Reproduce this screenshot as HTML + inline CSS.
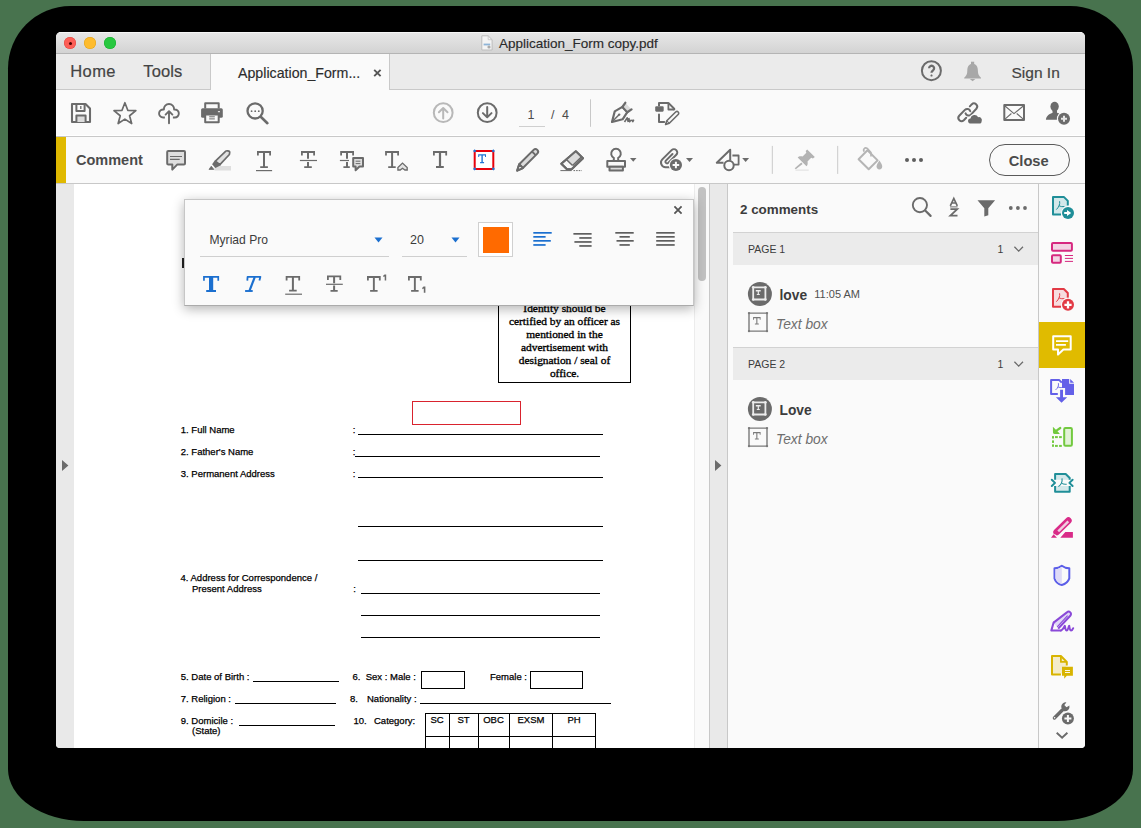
<!DOCTYPE html>
<html><head><meta charset="utf-8">
<style>
html,body{margin:0;padding:0;}
body{width:1141px;height:828px;background:#48734e;position:relative;overflow:hidden;font-family:"Liberation Sans",sans-serif;}
.a{position:absolute;}
.t{position:absolute;white-space:pre;line-height:1;}
svg{position:absolute;overflow:visible;}
#shadow{left:8px;top:6px;width:1125px;height:815px;background:#000;border-radius:62.5px 62.5px 76px 76px / 62.5px 62.5px 52px 52px;}
#win{left:56px;top:32px;width:1029px;height:716px;overflow:hidden;border-radius:5px 5px 4px 4px;background:#fafafa;}
#inner{left:-56px;top:-32px;width:1141px;height:828px;}
.ic{fill:none;stroke:#6d6d6d;stroke-width:2;}
</style></head><body>
<div id="shadow" class="a"></div>
<div id="win" class="a"><div id="inner" class="a">

<!-- title bar -->
<div class="a" style="left:56px;top:32px;width:1029px;height:21px;background:linear-gradient(#e7e7e7,#d3d3d3);border-top:1px solid #f6f6f6;box-sizing:border-box;"></div>
<div class="a" style="left:56px;top:53px;width:1029px;height:1px;background:#b4b4b4;"></div>
<div class="a" style="left:64px;top:37px;width:12px;height:12px;border-radius:50%;background:#fd5f57;box-shadow:inset 0 0 0 0.5px #e2463f;"></div>
<div class="a" style="left:68.5px;top:41.5px;width:3px;height:3px;border-radius:50%;background:#4d0000;"></div>
<div class="a" style="left:84px;top:37px;width:12px;height:12px;border-radius:50%;background:#febc2e;box-shadow:inset 0 0 0 0.5px #e1a116;"></div>
<div class="a" style="left:104px;top:37px;width:12px;height:12px;border-radius:50%;background:#28c840;box-shadow:inset 0 0 0 0.5px #14ae2a;"></div>
<div class="t" style="left:499px;top:37px;font-size:13.5px;color:#2a2a2a;-webkit-text-stroke:0.15px #2a2a2a;">Application_Form copy.pdf</div>

<!-- tab bar -->
<div class="a" style="left:56px;top:54px;width:1029px;height:35px;background:#ebebeb;"></div>
<div class="a" style="left:56px;top:89px;width:1029px;height:1px;background:#c9c9c9;"></div>
<div class="a" style="left:210px;top:54px;width:180px;height:36px;background:#fafafa;border-left:1px solid #c9c9c9;border-right:1px solid #c9c9c9;box-sizing:border-box;"></div>
<div class="t" style="left:70.2px;top:62.6px;font-size:16.5px;letter-spacing:0.45px;color:#444;-webkit-text-stroke:0.2px #444;">Home</div>
<div class="t" style="left:143.3px;top:62.6px;font-size:16.5px;letter-spacing:0.1px;color:#444;-webkit-text-stroke:0.2px #444;">Tools</div>
<div class="t" style="left:238px;top:66px;font-size:14.2px;color:#2c2c2c;-webkit-text-stroke:0.15px #2c2c2c;">Application_Form...</div>
<div class="t" style="left:1011.5px;top:64.5px;font-size:15.5px;color:#444;-webkit-text-stroke:0.2px #444;">Sign In</div>

<!-- toolbar -->
<div class="a" style="left:56px;top:90px;width:1029px;height:46px;background:#fafafa;"></div>
<div class="a" style="left:56px;top:135px;width:1029px;height:1px;background:#fff;"></div><div class="a" style="left:56px;top:136px;width:1029px;height:1px;background:#c8c8c8;"></div>

<!-- comment bar -->
<div class="a" style="left:56px;top:137px;width:1029px;height:46px;background:#fafafa;"></div>
<div class="a" style="left:56px;top:137px;width:10px;height:46px;background:#e0b900;"></div>
<div class="a" style="left:56px;top:183px;width:1029px;height:1px;background:#c8c8c8;"></div>
<div class="t" style="left:76px;top:153.4px;font-size:14.5px;font-weight:bold;color:#4b4b4b;">Comment</div>
<div class="a" style="left:989px;top:144px;width:81px;height:32px;border:1px solid #5a5a5a;border-radius:17px;box-sizing:border-box;"></div>
<div class="t" style="left:1008.7px;top:153.7px;font-size:14.7px;font-weight:bold;color:#4b4b4b;">Close</div>

<!-- content -->
<div class="a" style="left:56px;top:184px;width:18px;height:564px;background:#e9e9e9;"></div>
<div class="a" style="left:74px;top:184px;width:620px;height:564px;background:#ffffff;"></div>
<div class="a" style="left:694px;top:184px;width:15px;height:564px;background:#fafafa;border-left:1px solid #ececec;box-sizing:border-box;"></div>
<div class="a" style="left:709px;top:184px;width:1px;height:564px;background:#c8c8c8;"></div>
<div class="a" style="left:710px;top:184px;width:17px;height:564px;background:#e9e9e9;"></div>
<div class="a" style="left:727px;top:184px;width:1px;height:564px;background:#c8c8c8;"></div>
<div class="a" style="left:728px;top:184px;width:310px;height:564px;background:#fafafa;"></div>
<div class="a" style="left:1038px;top:184px;width:1px;height:564px;background:#c8c8c8;"></div>
<div class="a" style="left:1039px;top:184px;width:46px;height:564px;background:#fafafa;"></div>

<!-- page content -->
<div class="a" style="left:181.8px;top:258px;width:2.2px;height:10px;background:#222;"></div>
<div style="font-family:'Liberation Sans',sans-serif;color:#000;-webkit-text-stroke:0.25px #000;">
<div class="t" style="left:180.8px;top:425px;font-size:9.5px;">1. Full Name</div>
<div class="t" style="left:180.8px;top:446.6px;font-size:9.5px;">2. Father's Name</div>
<div class="t" style="left:180.8px;top:468.9px;font-size:9.5px;">3. Permanent Address</div>
<div class="t" style="left:352.8px;top:425px;font-size:9.5px;">:</div>
<div class="t" style="left:352.8px;top:446.6px;font-size:9.5px;">:</div>
<div class="t" style="left:352.8px;top:468.9px;font-size:9.5px;">:</div>
<div class="a" style="left:358px;top:433.5px;width:245px;height:1px;background:#000;"></div>
<div class="a" style="left:355px;top:455.6px;width:245px;height:1px;background:#000;"></div>
<div class="a" style="left:358px;top:477.3px;width:245px;height:1px;background:#000;"></div>
<div class="a" style="left:358px;top:526.2px;width:245px;height:1px;background:#000;"></div>
<div class="a" style="left:358px;top:559.7px;width:245px;height:1px;background:#000;"></div>
<div class="t" style="left:180.5px;top:572.7px;font-size:9.5px;">4. Address for Correspondence /</div>
<div class="t" style="left:192px;top:583.8px;font-size:9.5px;">Present Address</div>
<div class="t" style="left:353.2px;top:583.5px;font-size:9.5px;">:</div>
<div class="a" style="left:361px;top:592.9px;width:239px;height:1px;background:#000;"></div>
<div class="a" style="left:361px;top:614.9px;width:239px;height:1px;background:#000;"></div>
<div class="a" style="left:361px;top:636.6px;width:239px;height:1px;background:#000;"></div>

<div class="t" style="left:180.8px;top:671.9px;font-size:9.5px;">5. Date of Birth :</div>
<div class="a" style="left:253px;top:680.7px;width:85.5px;height:1px;background:#000;"></div>
<div class="t" style="left:352.5px;top:672.1px;font-size:9.5px;">6.  Sex : Male :</div>
<div class="a" style="left:421px;top:670.5px;width:44px;height:18px;border:1px solid #000;box-sizing:border-box;"></div>
<div class="t" style="left:490px;top:672.1px;font-size:9.5px;">Female :</div>
<div class="a" style="left:530px;top:670.5px;width:53px;height:18px;border:1px solid #000;box-sizing:border-box;"></div>

<div class="t" style="left:180.8px;top:693.8px;font-size:9.5px;">7. Religion :</div>
<div class="a" style="left:234.5px;top:702.9px;width:101px;height:1px;background:#000;"></div>
<div class="t" style="left:350px;top:693.9px;font-size:9.5px;">8.</div>
<div class="t" style="left:367px;top:693.9px;font-size:9.5px;">Nationality :</div>
<div class="a" style="left:419.5px;top:702.8px;width:191px;height:1px;background:#000;"></div>

<div class="t" style="left:180.8px;top:715.6px;font-size:9.5px;">9. Domicile :</div>
<div class="a" style="left:239px;top:725.1px;width:96px;height:1px;background:#000;"></div>
<div class="t" style="left:192px;top:725.9px;font-size:9.5px;">(State)</div>
<div class="t" style="left:353.5px;top:715.9px;font-size:9.5px;">10.</div>
<div class="t" style="left:374px;top:715.9px;font-size:9.5px;">Category:</div>
<div class="a" style="left:425px;top:712.7px;width:171px;height:60px;border:1px solid #000;box-sizing:border-box;"></div>
<div class="a" style="left:425px;top:735.7px;width:171px;height:1px;background:#000;"></div>
<div class="a" style="left:448.6px;top:712.7px;width:1px;height:60px;background:#000;"></div>
<div class="a" style="left:477.7px;top:712.7px;width:1px;height:60px;background:#000;"></div>
<div class="a" style="left:509px;top:712.7px;width:1px;height:60px;background:#000;"></div>
<div class="a" style="left:552px;top:712.7px;width:1px;height:60px;background:#000;"></div>
<div class="t" style="left:425px;width:24px;text-align:center;top:714.7px;font-size:9.5px;">SC</div>
<div class="t" style="left:449px;width:29px;text-align:center;top:714.7px;font-size:9.5px;">ST</div>
<div class="t" style="left:478px;width:31px;text-align:center;top:714.7px;font-size:9.5px;">OBC</div>
<div class="t" style="left:509.5px;width:43px;text-align:center;top:714.7px;font-size:9.5px;">EXSM</div>
<div class="t" style="left:552.5px;width:43px;text-align:center;top:714.7px;font-size:9.5px;">PH</div>
</div>

<!-- identity box -->
<div class="a" style="left:498px;top:280px;width:133px;height:103px;border:1px solid #000;box-sizing:border-box;"></div>
<div class="a" style="left:498px;top:302px;width:133px;text-align:center;font-family:'Liberation Serif',serif;font-size:11.4px;line-height:13px;color:#000;-webkit-text-stroke:0.35px #000;">Identity should be<br>certified by an officer as<br>mentioned in the<br>advertisement with<br>designation / seal of<br>office.</div>

<!-- red textbox annotation -->
<div class="a" style="left:411.5px;top:400.5px;width:109px;height:24px;border:1px solid #d9232e;box-sizing:border-box;"></div>

<!-- scrollbar thumb -->
<div class="a" style="left:698px;top:187px;width:8px;height:94px;border-radius:4px;background:#c2c2c2;"></div>

<!-- popup -->
<div class="a" style="left:184px;top:199px;width:510px;height:107px;background:#fafafa;border:1px solid #c6c6c6;border-bottom-color:#ababab;box-sizing:border-box;box-shadow:0 3px 11px rgba(0,0,0,0.3);"></div>
<div class="t" style="left:209.5px;top:234.3px;font-size:12.1px;color:#3b3b3b;">Myriad Pro</div>
<div class="a" style="left:199.5px;top:256px;width:189.5px;height:1px;background:#cfcfcf;"></div>
<div class="t" style="left:410px;top:233.5px;font-size:12.5px;color:#3b3b3b;">20</div>
<div class="a" style="left:401.5px;top:256px;width:65px;height:1px;background:#cfcfcf;"></div>
<svg style="left:374px;top:237px" width="9" height="6"><path d="M0.5 0.5 L8.5 0.5 L4.5 5.5 Z" fill="#1b6fcf"/></svg>
<svg style="left:451px;top:237px" width="9" height="6"><path d="M0.5 0.5 L8.5 0.5 L4.5 5.5 Z" fill="#1b6fcf"/></svg>
<div class="a" style="left:478px;top:222px;width:35px;height:35px;border:1px solid #d0d0d0;box-sizing:border-box;background:#fff;"></div>
<div class="a" style="left:482.5px;top:226.5px;width:26px;height:26px;background:#ff6a00;"></div>
<svg style="left:672px;top:204px" width="12" height="12"><path d="M2.4 2.4 L9.6 9.6 M9.6 2.4 L2.4 9.6" stroke="#555" stroke-width="1.8"/></svg>


<!-- comments panel -->
<div class="t" style="left:740px;top:202.8px;font-size:13.4px;font-weight:bold;color:#3c3c3c;">2 comments</div>
<div class="a" style="left:733px;top:232px;width:305px;height:1px;background:#d2d2d2;"></div>
<div class="a" style="left:733px;top:233px;width:305px;height:32px;background:#ebebeb;"></div>
<div class="t" style="left:748px;top:244px;font-size:10.5px;color:#3c3c3c;">PAGE 1</div>
<div class="t" style="left:997.5px;top:244px;font-size:10.5px;color:#3c3c3c;">1</div>
<div class="a" style="left:733px;top:347px;width:305px;height:1px;background:#d2d2d2;"></div>
<div class="a" style="left:733px;top:348px;width:305px;height:32px;background:#ebebeb;"></div>
<div class="t" style="left:748px;top:359px;font-size:10.5px;color:#3c3c3c;">PAGE 2</div>
<div class="t" style="left:997.5px;top:359px;font-size:10.5px;color:#3c3c3c;">1</div>

<div class="t" style="left:779.5px;top:289.3px;font-size:13.8px;font-weight:bold;color:#3c3c3c;">love</div>
<div class="t" style="left:814.3px;top:289px;font-size:11px;color:#505050;">11:05 AM</div>
<div class="t" style="left:776px;top:317.9px;font-size:13.8px;font-style:italic;color:#6e6e6e;">Text box</div>
<div class="t" style="left:779.5px;top:404.3px;font-size:13.8px;font-weight:bold;color:#3c3c3c;">Love</div>
<div class="t" style="left:776px;top:432.9px;font-size:13.8px;font-style:italic;color:#6e6e6e;">Text box</div>

<svg style="left:0;top:0" width="1141" height="828">
<g fill="none" stroke="#6b6b6b" stroke-width="2" stroke-linejoin="round">
<!-- header icons -->
<circle cx="919.9" cy="205.1" r="7.1" stroke-width="1.9"/>
<path d="M925.2 210.5 L930.6 215.9" stroke-width="2.2" stroke-linecap="round"/>
<path d="M950.3 205.8 L953.8 198.4 L957.3 205.8 M951.6 203 H956" stroke-width="1.7" stroke-linejoin="miter"/>
<path d="M950 206.9 H957.6" stroke-width="1"/>
<path d="M950.4 209.2 H957.2 L950.4 215.6 H957.5" stroke-width="1.8" stroke-linejoin="miter"/>
<path d="M977.5 200.2 H995.1 L988.3 208.3 V215.2 L984.3 216.6 V208.3 Z" fill="#6b6b6b" stroke="none"/>
<g fill="#6b6b6b" stroke="none"><circle cx="1010.8" cy="208" r="1.9"/><circle cx="1017.9" cy="208" r="1.9"/><circle cx="1025" cy="208" r="1.9"/></g>
<!-- chevrons -->
<path d="M1014.4 246.8 L1018.7 251.1 L1023 246.8 M1014.4 361.8 L1018.7 366.1 L1023 361.8" stroke-width="1.3" stroke-linejoin="miter"/>
<!-- avatars -->
<circle cx="759.9" cy="293.9" r="12" fill="#6b6b6b" stroke="none"/>
<circle cx="759.9" cy="408.9" r="12" fill="#6b6b6b" stroke="none"/>
<g stroke="#ececec" stroke-width="1.8">
<rect x="753.2" y="287.3" width="12.2" height="12.2"/>
<rect x="753.2" y="402.3" width="12.2" height="12.2"/>
</g>
<g fill="#ececec" stroke="none">
<circle cx="753.2" cy="287.3" r="1.3"/><circle cx="765.4" cy="287.3" r="1.3"/><circle cx="753.2" cy="299.5" r="1.3"/><circle cx="765.4" cy="299.5" r="1.3"/>
<circle cx="753.2" cy="402.3" r="1.3"/><circle cx="765.4" cy="402.3" r="1.3"/><circle cx="753.2" cy="414.5" r="1.3"/><circle cx="765.4" cy="414.5" r="1.3"/>
<path d="M755.8 290 H760.7 V291.6 H758.9 V294 H759.8 V295 H756.8 V294 H757.7 V291.6 H755.8 Z"/>
<path d="M755.8 405 H760.7 V406.6 H758.9 V409 H759.8 V410 H756.8 V409 H757.7 V406.6 H755.8 Z"/>
</g>
<!-- text box icons -->
<g stroke="#7a7a7a" stroke-width="1.4">
<rect x="749" y="313.1" width="18" height="18"/>
<rect x="749" y="428.1" width="18" height="18"/>
</g>
<g fill="#7a7a7a" stroke="none">
<circle cx="749" cy="313.1" r="1.2"/><circle cx="767" cy="313.1" r="1.2"/><circle cx="749" cy="331.1" r="1.2"/><circle cx="767" cy="331.1" r="1.2"/>
<circle cx="749" cy="428.1" r="1.2"/><circle cx="767" cy="428.1" r="1.2"/><circle cx="749" cy="446.1" r="1.2"/><circle cx="767" cy="446.1" r="1.2"/>
<path d="M753.1 317 H760.6 V319.8 H759.7 V318.2 H757.4 V323.6 H758.8 V324.5 H754.9 V323.6 H756.3 V318.2 H754 V319.8 H753.1 Z"/>
<path d="M753.1 432 H760.6 V434.8 H759.7 V433.2 H757.4 V438.6 H758.8 V439.5 H754.9 V438.6 H756.3 V433.2 H754 V434.8 H753.1 Z"/>
</g>
<!-- gutter arrows -->
<path d="M62 460 L68.4 465.5 L62 471 Z M715 460 L721.4 465.5 L715 471 Z" fill="#6b6b6b" stroke="none"/>
</g>
</svg>

<!--PANEL-->

<!-- sidebar -->
<div class="a" style="left:1039px;top:322px;width:46px;height:46px;background:#e0bb00;"></div>
<svg style="left:0;top:0" width="1141" height="828">
<g fill="none" stroke-width="2" stroke-linejoin="round">
<!-- export pdf teal -->
<g stroke="#1f8e98">
<path d="M1061 214.6 H1053 V196.9 H1063.8 L1067.8 200.9 V205.5" fill="#d3e8ea"/>
<path d="M1059.6 201.2 C1060.3 204 1058.6 207.6 1056.3 209.6 M1058.9 205.6 C1060.5 206.6 1062.5 206.8 1064.4 206.5" stroke-width="1"/>
</g>
<circle cx="1068" cy="212.9" r="7" fill="#fafafa"/>
<circle cx="1068" cy="212.9" r="6" fill="#1f8e98"/>
<path d="M1064.2 212.9 H1067.6" stroke="#fff" stroke-width="2"/>
<path d="M1067 209.9 L1071.2 212.9 L1067 215.9 Z" fill="#fff"/>
<!-- organize magenta -->
<g stroke="#d6287f">
<rect x="1052" y="243" width="19.9" height="7.7" rx="1" fill="#f3d4e4"/>
<rect x="1052" y="255.2" width="8.8" height="7.5" rx="1" fill="#f3d4e4"/>
<path d="M1064.9 255.5 H1073 M1064.9 258.4 H1073 M1064.9 261.4 H1073" stroke-width="1"/>
</g>
<!-- create pdf red -->
<g stroke="#e23a45">
<path d="M1061 306.7 H1053 V289 H1063.8 L1067.8 293 V297.7" fill="#f7dcdf"/>
<path d="M1059.6 293.3 C1060.3 296.1 1058.6 299.7 1056.3 301.7 M1058.9 297.7 C1060.5 298.7 1062.5 298.9 1064.4 298.6" stroke-width="1"/>
</g>
<circle cx="1068" cy="304.8" r="7" fill="#fafafa"/>
<circle cx="1068" cy="304.8" r="6" fill="#e23a45"/>
<path d="M1064.4 304.8 H1071.6 M1068 301.2 V308.4" stroke="#fff" stroke-width="2.3"/>
<!-- comment active -->
<path d="M1053.2 336.2 H1070.7 V349.6 H1063.4 L1058 354.6 V349.6 H1053.2 Z" stroke="#fff" stroke-width="2"/>
<path d="M1056 341.2 H1068.2 M1056 344.9 H1065.9" stroke="#fff" stroke-width="1.8"/>
<!-- combine purple -->
<g stroke="#6360e8">
<path d="M1057.8 393.9 H1051.1 V380.1 H1059.3 L1061.8 382.6" />
<path d="M1058.4 383.2 C1059 385.5 1057.6 388.4 1055.6 389.9 M1058 386.8 C1059.3 387.6 1060.6 387.7 1061.8 387.5" stroke-width="0.9"/>
</g>
<path d="M1062 379.1 H1069.2 V383.7 H1074 V394.9 H1065.1 V388.1 H1062 Z" fill="#6360e8"/>
<path d="M1070.2 379.1 L1074 382.7 H1070.2 Z" fill="#6360e8"/>
<path d="M1060.1 389.8 H1063 V397.2 H1067.2 L1061.55 402.8 L1055.9 397.2 H1060.1 Z" fill="#6360e8"/>
<!-- organize pages green -->
<g stroke="#72c93f">
<rect x="1064.2" y="428" width="7.7" height="17.7" rx="1.2" fill="#e3f2d8"/>
</g>
<g fill="#72c93f" stroke="none">
<rect x="1052" y="436.1" width="2" height="2.4"/><rect x="1052" y="440.4" width="2" height="2.5"/><rect x="1052" y="444.4" width="2" height="2.4"/>
<rect x="1055" y="436.1" width="2.8" height="2"/><rect x="1059.1" y="436.1" width="2.7" height="2"/>
<rect x="1055" y="444.9" width="2.8" height="2"/><rect x="1059.1" y="444.9" width="2.7" height="2"/>
</g>
<path d="M1052.9 427 L1059.9 434 L1054.2 434 Z" fill="#72c93f"/>
<path d="M1052.9 427 L1053 433.5 L1059.5 433.5 Z" fill="#72c93f"/>
<path d="M1056.5 430.6 L1060.3 428" stroke="#72c93f" stroke-width="2.2" stroke-linecap="round"/>
<!-- compress teal -->
<g stroke="#1f8e98">
<path d="M1055.1 479.8 V474 H1065.7 L1069.7 478 V479.8 M1055.1 486.1 V491.7 H1069.7 V486.1" fill="#d3e8ea"/>
<path d="M1051.8 479.8 L1055 482.9 L1051.8 486 M1072.6 479.8 L1069.4 482.9 L1072.6 486" stroke-width="2" stroke-linecap="round"/>
<path d="M1062 478.3 C1062.5 481.8 1060.6 485.1 1058.4 486.6 M1062 483.4 C1063.5 484.6 1065.2 484.4 1066.7 484.2" stroke-width="1.1"/>
</g>
<!-- highlighter pink -->
<path d="M1056.6 532.1 L1068.4 520.6" stroke="#d92b88" stroke-width="6.6" stroke-linecap="round"/>
<path d="M1058.2 531.3 L1068.3 521.4" stroke="#f1cde0" stroke-width="2.4" stroke-linecap="butt"/>
<path d="M1054.4 534.4 L1058.9 538.8" stroke="#fafafa" stroke-width="1.2"/>
<path d="M1051 537.7 L1053.6 534.2 L1057 537.7 Z M1060.3 537.7 L1065.3 531.9 H1072.9 V537.7 Z" fill="#d92b88"/>
<!-- shield -->
<path d="M1061.8 565.8 C1059.6 567.5 1057 568.3 1054.5 568.3 V578.4 C1055.5 582 1058.5 584.2 1061.8 585 C1065.1 584.2 1068.1 582 1069.3 578.4 V568.3 C1066.6 568.3 1064 567.5 1061.8 565.8 Z" fill="#fafafa" stroke="#5b5ee8"/>
<path d="M1061.8 566.8 V584 C1059 583.2 1056.4 581.4 1055.5 578.3 V569.2 C1057.8 569 1060 568.2 1061.8 566.8 Z" fill="#dedaf7"/>
<!-- sign purple -->
<path d="M1053.6 622.6 L1066.9 612.4 A2.4 2.4 0 0 1 1070.3 615.8 L1058.2 628.6" fill="#e0d8f6" stroke="#8a49d8" stroke-width="2"/>
<path d="M1057.2 626.9 L1067.6 615.6" stroke="#8a49d8" stroke-width="1.1"/>
<path d="M1053.6 622.6 L1051.3 630.6 H1060.8" stroke="#8a49d8" stroke-width="2" stroke-linecap="round" stroke-linejoin="round"/>
<path d="M1060.8 630.6 C1062.4 630.2 1063.8 627.6 1064.8 625.8 C1065.2 628 1065.5 630.6 1066.8 630.6 C1068 630.6 1068.4 627.2 1069.2 625.8 C1069.6 628 1069.9 630.6 1071.1 630.6 C1072 630.6 1072.8 629.2 1073.2 628.2" stroke="#8a49d8" stroke-width="2" stroke-linecap="round"/>
<!-- send for comments yellow -->
<g stroke="#d8b400">
<path d="M1060.9 674.6 H1052 V656 H1060.9 L1066.8 661.9 V665.5" fill="#f4ecc9"/>
<path d="M1060.9 656 V661.9 H1066.8" stroke-width="1.8"/>
</g>
<path d="M1062 666.8 H1072.9 V675.7 H1066.8 L1064.2 678.8 V675.7 H1062 Z" fill="#d8b400"/>
<path d="M1065 670.5 H1070 M1065 672.5 H1070" stroke="#fff" stroke-width="0.9"/>
<!-- wrench -->
<path d="M1054.4 718 L1062.6 709.8" stroke="#6b6b6b" stroke-width="3.4" stroke-linecap="round"/>
<path d="M1061.2 707.2 A4.7 4.7 0 0 1 1066.4 702.4 L1064.3 704.9 L1066.5 707.3 L1069.4 705.5 A4.7 4.7 0 0 1 1063.8 711.2 Z" fill="#6b6b6b"/>
<circle cx="1054.6" cy="717.8" r="0.8" fill="#fafafa"/>
<circle cx="1067.9" cy="718.4" r="7" fill="#fafafa"/>
<circle cx="1067.9" cy="718.4" r="6" fill="#6b6b6b"/>
<path d="M1064.4 718.4 H1071.4 M1067.9 714.9 V721.9" stroke="#fafafa" stroke-width="2"/>
<path d="M1056.7 732.8 L1062.1 737.8 L1067.4 732.8" stroke="#6b6b6b" stroke-width="1.9" stroke-linejoin="miter"/>
</g>
</svg>

<!--SIDEBAR-->

<svg style="left:0;top:0" width="1141" height="828">
<g fill="none" stroke="#6b6b6b" stroke-width="2" stroke-linejoin="round">
<!-- save -->
<path d="M72 104 H85.5 L90 108.5 V122 H72 Z" stroke-width="2.1"/>
<path d="M76.4 104 V111 H84.6 V104" />
<path d="M80.8 106 V109" stroke-width="1.3"/>
<path d="M76.4 122 V115.5 H85.6 V122" fill="#dcdcdc"/>
<!-- star -->
<path d="M124.90 102.75 L127.78 110.29 L135.84 110.70 L129.56 115.76 L131.66 123.55 L124.90 119.15 L118.14 123.55 L120.24 115.76 L113.96 110.70 L122.02 110.29 Z" stroke-width="1.7"/>
<!-- cloud upload -->
<path d="M164.9 117.55 H163.1 A4.05 4.05 0 1 1 163.86 109.52 A5.15 5.15 0 1 1 174.14 109.5 A4.05 4.05 0 1 1 174.8 117.55 H172.9" stroke-width="1.9"/>
<path d="M169 123.3 V111.4 M165.6 114.6 L169 111.2 L172.4 114.6" stroke-width="1.9" stroke-linecap="round"/>
<!-- printer -->
<path d="M205.2 108.5 V103.2 H218.7 V108.5" stroke-width="2"/>
<rect x="201.1" y="108.2" width="21.7" height="9.6" rx="1.5" fill="#6b6b6b" stroke="none"/>
<rect x="205.2" y="114.6" width="13.5" height="7.6" fill="#fafafa" stroke-width="2"/>
<path d="M209.2 116.8 H214.8 M209.2 118.9 H214.8" stroke-width="1"/>
<rect x="217.9" y="111.2" width="2.1" height="1" fill="#fafafa" stroke="none"/>
<!-- search more -->
<circle cx="255.1" cy="110.9" r="7.6" stroke-width="2.3"/>
<path d="M261 117 L267.4 123.2" stroke-width="2.6" stroke-linecap="round"/>
<circle cx="251.6" cy="111.2" r="0.9" fill="#6b6b6b" stroke="none"/>
<circle cx="255.2" cy="111.2" r="0.9" fill="#6b6b6b" stroke="none"/>
<circle cx="258.8" cy="111.2" r="0.9" fill="#6b6b6b" stroke="none"/>
<!-- prev page (disabled) -->
<g stroke="#b8b8b8">
<circle cx="443.2" cy="112.7" r="9.4"/>
<path d="M443.2 118.4 V108.2 M438.9 112.3 L443.2 108 L447.5 112.3" stroke-linecap="round"/>
</g>
<!-- next page -->
<circle cx="487.2" cy="112.7" r="9.4"/>
<path d="M487.2 107 V117.2 M482.9 113.1 L487.2 117.4 L491.5 113.1" stroke-linecap="round"/>
<!-- separator -->
<path d="M590.5 99.3 V126.8" stroke="#c8c8c8" stroke-width="1"/>
<!-- pen -->
<path d="M612 122 L614.7 111.4 L622.4 106.9 L627.3 112.2 L622.6 119.3 Z" stroke-width="2.2"/>
<path d="M625.3 102.8 L631.5 109.4 L627.3 112.2 L622.4 106.9 Z" fill="#dcdcdc" stroke="none"/>
<path d="M625.3 102.8 L622.4 106.9 M631.5 109.4 L627.3 112.2" stroke-width="2.3" stroke-linecap="round"/>
<path d="M622.4 106.9 L627.3 112.2" stroke-width="1.8"/>
<path d="M612.4 121.6 L619 114.8" stroke-width="1.5"/>
<circle cx="619.2" cy="114.6" r="1.2" fill="#6b6b6b" stroke="none"/>
<path d="M624.5 122 L627.3 117.8 L628.2 122 M628.8 118 L629.6 121.8 L631 120 M631.5 119.6 L632.8 121.6 L633.8 119.6" stroke-width="1.6"/>
<!-- doc edit -->
<rect x="655.2" y="106.3" width="8.5" height="5.4" rx="1.1" fill="#6b6b6b" stroke="none"/>
<path d="M659 106.3 V102.9 H668.4 L674.2 108.8 V110.3" stroke-width="2"/>
<path d="M668.4 102.9 V109.5 H674.2" stroke-width="1.8"/>
<path d="M659 114.6 V122 H664.2" stroke-width="2" stroke-linecap="round"/>
<path d="M666.8 120.8 L675.9 111.8 A1.8 1.8 0 0 1 678.4 114.3 L669.3 123.3 L665.6 124.4 Z" fill="#fafafa" stroke-width="1.6"/>
<path d="M666.8 120.8 L669.3 123.3" stroke-width="1.1"/>

<!-- link cloud -->
<path d="M969.82 106.39 L971.66 104.42 A3.2 3.2 0 0 1 976.34 108.78 L970.94 114.58 A3.2 3.2 0 0 1 965.54 113.34" stroke-width="2" stroke-linecap="round"/>
<path d="M966.20 117.75 L963.80 120.22 A3.2 3.2 0 0 1 959.20 115.78 L964.90 109.88 A3.2 3.2 0 0 1 970.28 111.22" stroke-width="2" stroke-linecap="round"/>
<path d="M969.6 123.4 A2.6 2.6 0 0 1 970.4 118.4 A4.2 4.2 0 0 1 978.2 117.2 A3 3 0 0 1 981.6 121.4 A2.4 2.4 0 0 1 980.4 123.4 Z" fill="#fafafa" stroke="#fafafa" stroke-width="2"/>
<path d="M969.6 123.4 A2.6 2.6 0 0 1 970.4 118.4 A4.2 4.2 0 0 1 978.2 117.2 A3 3 0 0 1 981.6 121.4 A2.4 2.4 0 0 1 980.4 123.4 Z" fill="#6b6b6b" stroke="none"/>
<!-- mail -->
<rect x="1004.3" y="105.1" width="19.7" height="14.8" stroke-width="2"/>
<path d="M1005 106 L1014 113.6 L1023.3 106 M1005 119.2 L1011.4 113.5 M1023.3 119.2 L1016.7 113.5" stroke-width="1.1"/>
<!-- person add -->
<ellipse cx="1054.6" cy="106.6" rx="4.2" ry="4.8" fill="#6b6b6b" stroke="none"/>
<path d="M1052.5 110 L1056.8 110 L1057.2 113 L1059.2 113.2 L1058.5 114.3 A6.9 6.9 0 0 0 1056.9 119.8 H1045.9 C1046.3 115.4 1049.8 113.4 1052.5 112.9 Z" fill="#6b6b6b" stroke="none"/>
<circle cx="1064" cy="118.8" r="6.9" fill="#fafafa" stroke="none"/>
<circle cx="1064" cy="118.8" r="6" fill="#6b6b6b" stroke="none"/>
<path d="M1061 118.8 H1067 M1064 115.8 V121.8" stroke="#e6e6e6" stroke-width="2"/>
<!-- help -->
<circle cx="931.4" cy="70.7" r="9.5" stroke-width="2"/>
<path d="M929.1 68.2 A2.5 2.5 0 1 1 933.2 70.2 C932 71 931.5 71.5 931.5 72.8" stroke-width="2.3"/>
<path d="M931.5 74.6 V76.6 M930.5 75.6 H932.5" stroke-width="1.3"/>
<!-- bell -->
<rect x="971" y="61.7" width="3.2" height="3" fill="#a8a8a8" stroke="none"/>
<path d="M972.6 63.8 C976.3 63.8 977.9 66.8 977.9 70.8 C977.9 74 978.8 76 981 77.8 V78.5 H964.2 V77.8 C966.4 76 967.3 74 967.3 70.8 C967.3 66.8 968.9 63.8 972.6 63.8 Z" fill="#a8a8a8" stroke="none"/>
<path d="M969.8 79.1 H975.4 L972.6 81.3 Z" fill="#a8a8a8" stroke="none"/>
</g>
</svg>

<svg style="left:0;top:0" width="1141" height="828">
<g fill="none" stroke="#6b6b6b" stroke-width="2" stroke-linejoin="round">
<!-- page number -->
<!-- comment bubble -->
<path d="M168.3 151 H184 Q185 151 185 152 V163.4 Q185 164.4 184 164.4 H177.4 L172.3 169.6 V164.4 H168.3 Q167.2 164.4 167.2 163.4 V152 Q167.2 151 168.3 151 Z" fill="#dedede" stroke-width="2"/>
<path d="M170 156.5 H182 M170 159.4 H179.7" stroke-width="1.1"/>
<!-- highlighter -->
<rect x="214.5" y="166" width="16.5" height="4.5" fill="#dedede" stroke="none"/>
<path d="M215.4 161.2 L225.8 151.2 Q226.5 150.6 227.5 150.8 L228.9 151.1 Q229.8 151.4 229.7 152.3 L229.4 154.5 L219.9 164.6 Z" fill="#e0e0e0" stroke-width="1.7"/>
<path d="M212.1 164.3 L214.8 160.6 L220.8 165.3 L215.4 167.9 Z" fill="#6b6b6b" stroke="none"/>
<path d="M209 169.4 L211.3 166.2 L213.8 169.4 Z" fill="#6b6b6b" stroke="#6b6b6b" stroke-width="0.8"/>
<!-- underline T -->
<g fill="#6b6b6b" stroke="none">
<path d="M257 151 H271 V155.6 H269.2 V152.9 H265 V166.2 H267.9 V167.9 H260.2 V166.2 H263 V152.9 H258.8 V155.6 H257 Z"/>
<rect x="256" y="170" width="16.1" height="1.2"/>
<!-- strike T -->
<path d="M301 151 H315 V155.6 H313.2 V152.9 H309 V158.7 H307 V152.9 H302.8 V155.6 H301 Z"/>
<rect x="299.9" y="159.9" width="17.1" height="1.2"/>
<path d="M307 162 H309 V166.2 H311.8 V167.9 H304.2 V166.2 H307 Z"/>
<!-- replace T -->
<path d="M340.2 151 H354 V155.6 H352.2 V152.9 H348 V158.7 H346 V152.9 H342 V155.6 H340.2 Z"/>
<rect x="339.9" y="159.9" width="9.1" height="1.2"/>
<path d="M346 162 H348 V166.2 H349.8 V167.9 H343.4 V166.2 H346 Z"/>
<!-- insert T -->
<path d="M385.1 151 H399 V155.6 H397.2 V152.9 H393.1 V166.2 H395.7 V167.9 H388.2 V166.2 H391.1 V152.9 H386.9 V155.6 H385.1 Z"/>
<!-- plain T -->
<path d="M433 151 H447.1 V155.6 H445.3 V152.9 H441.1 V166.1 H443.8 V167.9 H436 V166.1 H438.9 V152.9 H434.8 V155.6 H433 Z"/>
</g>
<path d="M353.2 158 H363 V166.5 H359.5 L355.6 170.2 V166.5 H353.2 Z" fill="#dedede" stroke-width="2"/>
<path d="M355.6 161.2 H360.4 M355.6 163.6 H360.4" stroke-width="1"/>
<path d="M398.2 170 L402.3 165.2 L406.9 170 Z" fill="none" stroke="none"/>
<path d="M397.9 170 V167.5 L402.5 163.1 L407.2 167.5 V170 H404.9 L402.5 168.3 L400.2 170 Z" fill="#e4e4e4" stroke-width="1.3" stroke-linejoin="miter"/>
<!-- text box tool (selected) -->
<rect x="474.7" y="150.9" width="18.6" height="18" fill="#fff" stroke="#e8000b" stroke-width="2"/>
<g fill="#1f74d4" stroke="none">
<path d="M474.7 149.2 L476.4 150.9 L474.7 152.6 L473 150.9 Z M493.3 149.2 L495 150.9 L493.3 152.6 L491.6 150.9 Z M474.7 167.2 L476.4 168.9 L474.7 170.6 L473 168.9 Z M493.3 167.2 L495 168.9 L493.3 170.6 L491.6 168.9 Z"/>
<path d="M478.2 154.2 H486 V157 H485 V155.5 H482.8 V162 H484.1 V163.2 H480.1 V162 H481.4 V155.5 H479.2 V157 H478.2 Z"/>
</g>
<!-- pencil -->
<path d="M517.2 170.6 L519.2 164.3 L533.6 149.9 A2.6 2.6 0 0 1 537.3 153.6 L522.9 168 Z" fill="#dcdcdc" stroke-width="2"/>
<path d="M519.4 164.3 L522.9 167.8 M532 151.5 L535.7 155.2" stroke-width="1.8"/>
<path d="M517.2 170.6 L519.2 164.3 L522.9 168 Z" fill="#fafafa" stroke-width="2"/>
<!-- eraser -->
<path d="M575.8 151.2 L583 158.3 L571.6 169.2 L567 169.2 L561.3 163.7 Z" fill="#fafafa" stroke-width="2"/>
<path d="M575.8 151.2 L581.2 156.5 L572.3 165.3 L566.9 160 Z" fill="#dcdcdc" stroke="none"/>
<path d="M566.9 160 L572.3 165.3 M581.6 156.9 L572.5 165.6" stroke-width="1.5"/>
<path d="M575.8 151.2 L583 158.3 L571.6 169.2 L567 169.2 L561.3 163.7 Z" stroke-width="2"/>
<path d="M560.4 170.6 H571.6" stroke-width="1"/>
<path d="M573.5 170.6 H581.8" stroke-width="1" stroke-dasharray="1.6 1"/>
<!-- stamp -->
<path d="M613.8 161.2 V157.9 A4.8 4.8 0 1 1 618.2 157.9 V161.2" stroke-width="2"/>
<rect x="607.3" y="161.1" width="17.7" height="5.6" stroke-width="2"/>
<rect x="609.5" y="166.8" width="13.4" height="3.7" fill="#dcdcdc" stroke-width="2"/>
<!-- attach -->
<path d="M671.8 167.2 L665.6 167.2 A4.6 4.6 0 0 1 662.3 159.4 L671.6 150.1 A3.3 3.3 0 0 1 676.3 154.8 L668.2 162.9 A1.6 1.6 0 0 1 665.9 160.6 L672.5 154" stroke-width="2" stroke-linecap="round"/>
<circle cx="675.9" cy="165" r="7.1" fill="#fafafa" stroke="none"/>
<circle cx="675.9" cy="165" r="6.1" fill="#6b6b6b" stroke="none"/>
<path d="M672.6 165 H679.2 M675.9 161.7 V168.3" stroke="#fafafa" stroke-width="2"/>
<!-- shapes -->
<path d="M732.4 155.5 H738.6 V164.6 H734" stroke-width="1.8"/>
<path d="M730.2 160 V149.7 L716.8 162.8 H723.5" stroke-width="2"/>
<circle cx="729" cy="165.5" r="4.7" stroke-width="2"/>
<!-- dropdown arrows -->
<g fill="#6b6b6b" stroke="none">
<path d="M630 158 H636.5 L633.25 161.8 Z"/>
<path d="M686 158 H693 L689.5 162 Z"/>
<path d="M742.2 158 H749.1 L745.65 162 Z"/>
</g>
<!-- separators -->
<path d="M772.3 145.9 V173.9 M837.7 145.9 V173.9" stroke="#cacaca" stroke-width="1"/>
<!-- pin disabled -->
<g fill="#b3b3b3" stroke="none">
<path d="M807.2 149.4 L814.8 157 L812.9 158.4 L811.2 157.7 L807.5 161.4 C808 163.7 807.5 165.2 806.5 166.2 L797.7 157.4 C798.7 156.4 800.4 155.9 802.6 156.5 L806.3 152.8 L805.7 151.1 Z"/>
<path d="M801.3 162.6 L802.6 163.9 L795.8 169.3 L794.7 168.2 Z"/>
</g>
<rect x="795.5" y="169.6" width="13.2" height="1" fill="#dedede" stroke="none"/>
<!-- bucket disabled -->
<path d="M858.6 159.2 L867.5 150.3 L877.6 160.4 L868.7 169.3 Z" stroke="#b5b5b5" stroke-width="2"/>
<path d="M864.4 151.6 C862.4 149.6 864.8 146.8 867.2 148.4 L871 152.6 V156.4" stroke="#b5b5b5" stroke-width="1.6"/>
<path d="M879.4 160.6 C881.4 163.4 882.2 165 882.2 166.6 A2.8 2.8 0 0 1 876.6 166.6 C876.6 165 877.4 163.4 879.4 160.6 Z" fill="#b5b5b5" stroke="none"/>
<!-- more -->
<g fill="#5e5e5e" stroke="none">
<circle cx="907" cy="159.9" r="2"/><circle cx="914" cy="159.9" r="2"/><circle cx="921" cy="159.9" r="2"/>
</g>
</g>
</svg>
<div class="t" style="left:527.5px;top:108.8px;font-size:12.5px;color:#4b4b4b;">1</div>
<div class="a" style="left:519px;top:126px;width:26px;height:1px;background:#cfcfcf;"></div>
<div class="t" style="left:551px;top:108.8px;font-size:12.5px;color:#4b4b4b;">/</div>
<div class="t" style="left:562px;top:108.8px;font-size:12.5px;color:#4b4b4b;">4</div>

<svg style="left:0;top:0" width="1141" height="828">
<g stroke="none">
<!-- align -->
<g fill="#1b6fcf">
<rect x="533.3" y="232" width="18.4" height="1.7"/><rect x="533.3" y="236" width="12.3" height="1.7"/>
<rect x="533.3" y="240" width="17.5" height="1.7"/><rect x="533.3" y="244.1" width="12.3" height="1.7"/>
</g>
<g fill="#5e5e5e">
<rect x="573.4" y="233" width="18.2" height="1.7"/><rect x="579.3" y="237.1" width="12.3" height="1.7"/>
<rect x="574.4" y="241.1" width="17.2" height="1.7"/><rect x="579.3" y="245.1" width="12.3" height="1.7"/>
<rect x="615.3" y="232" width="18.4" height="1.7"/><rect x="619.5" y="236" width="10.3" height="1.7"/>
<rect x="616.5" y="240" width="17.2" height="1.7"/><rect x="619.5" y="244.1" width="10.3" height="1.7"/>
<rect x="656.2" y="232" width="18.5" height="1.7"/><rect x="656.2" y="236" width="18.5" height="1.7"/>
<rect x="656.2" y="240" width="18.5" height="1.7"/><rect x="656.2" y="244.1" width="18.5" height="1.7"/>
</g>
<!-- bold T -->
<path fill="#1b6fcf" d="M203.1 275.9 H219.1 V280.7 H217.4 V277.7 H213.2 V290 H216 V291.9 H206.2 V290 H209 V277.7 H204.8 V280.7 H203.1 Z"/>
<!-- italic T -->
<g fill="none" stroke="#1b6fcf" stroke-linejoin="round"><path d="M247.3 280.6 L247.6 276.8 H260.4 L259.4 280.6" stroke-width="1.8"/><path d="M254.8 277 L249.4 291" stroke-width="2.1"/><path d="M245.1 291 H252.7" stroke-width="1.9"/></g>
<!-- underline T -->
<g fill="#6b6b6b">
<path d="M285.7 275.9 H300.1 V280.6 H298.3 V277.8 H293.9 V289.8 H296.7 V291.6 H289.1 V289.8 H291.9 V277.8 H287.5 V280.6 H285.7 Z"/>
<rect x="285.2" y="293.6" width="16.8" height="1.2"/>
<!-- strike T -->
<path d="M327 275.4 H341.2 V280.1 H339.4 V277.3 H335.1 V283.2 H333.1 V277.3 H328.8 V280.1 H327 Z"/>
<rect x="326" y="283.7" width="16.8" height="1.2"/>
<path d="M333.1 285.5 H335.1 V289.9 H337.7 V291.7 H330.5 V289.9 H333.1 Z"/>
<!-- super T -->
<path d="M367 276 H380.7 V280.6 H378.9 V277.9 H374.8 V289.9 H377.6 V291.7 H370.1 V289.9 H372.9 V277.9 H368.8 V280.6 H367 Z"/>
<path d="M384.6 274.5 H386.2 V280.6 H384.7 V276.4 L383.3 277.1 V275.6 Z"/>
<!-- sub T -->
<path d="M408 276 H421.7 V280.6 H419.9 V277.9 H415.8 V289.9 H418.6 V291.7 H411.1 V289.9 H413.9 V277.9 H409.8 V280.6 H408 Z"/>
<path d="M423.6 286.6 H425.4 V292.7 H423.8 V288.5 L422.3 289.2 V287.7 Z"/>
</g>
</g>
</svg>

<svg style="left:0;top:0" width="1141" height="828">
<path d="M481.8 35.8 H488.2 L492.1 39.7 V50 H481.8 Z" fill="#f4f4f4" stroke="#bdbdbd" stroke-width="1"/>
<path d="M488.2 35.8 V39.7 H492.1" fill="none" stroke="#c4c4c4" stroke-width="0.8"/>
<rect x="483.6" y="43.6" width="6.6" height="1.8" fill="#8fb5d8"/>
<circle cx="489" cy="47" r="1.6" fill="#a9a9a9"/>
<path d="M374.2 69.8 L380.6 76.2 M380.6 69.8 L374.2 76.2" stroke="#555" stroke-width="1.9"/>
</svg>
<!--ICONS-->

</div></div>
</body></html>
